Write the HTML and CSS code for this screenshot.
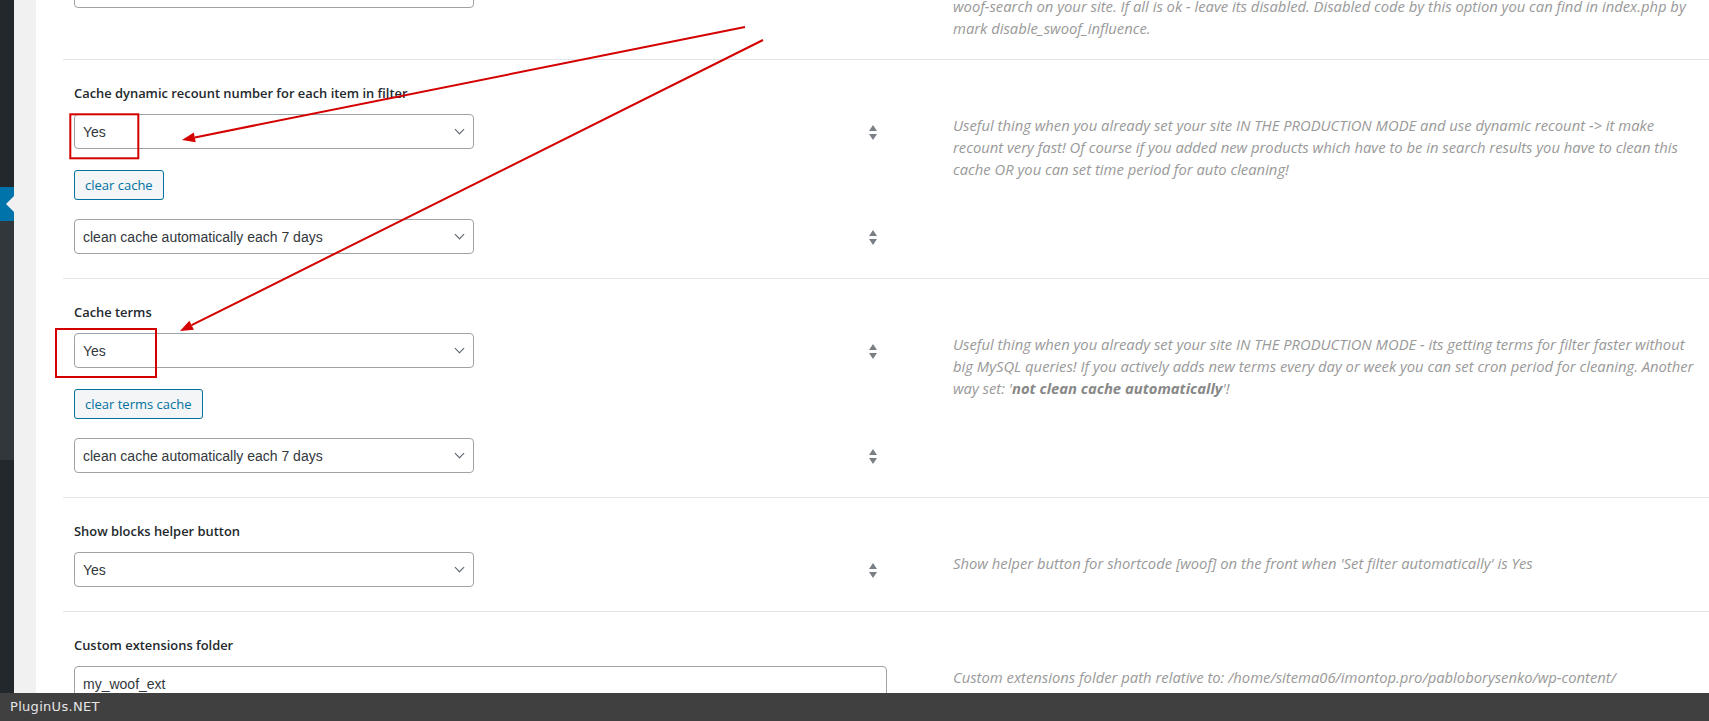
FILE: index.html
```html
<!DOCTYPE html>
<html>
<head>
	<meta charset="utf-8">
	<title>WOOF - Advanced options</title>
	<link rel="stylesheet" href="styles.css">
</head>
<body>
	<div class="wrap">
		<div class="adminmenu">
			<div class="menu-dark menu-top"></div>
			<div class="menu-current"><span class="menu-pointer"></span></div>
			<div class="menu-sub"></div>
			<div class="menu-dark menu-rest"></div>
		</div>
		<div class="gutter"></div>

		<div class="panel">
			<!-- previous option, scrolled mostly out of view -->
			<div class="row row-first">
				<div class="field">
					<div class="label">Disable swoof influence</div>
					<div class="ctl">
						<div class="sel"><select><option>No</option></select></div>
						<svg class="sort" width="8" height="16" viewBox="0 0 8 16"><path d="M0 6 4 0 8 6z M0 9 8 9 4 15z"/></svg>
					</div>
				</div>
				<div class="desc">Sometimes code 'wp_query->is_post_type_archive = true' does not necessary. Try to disable this and try<br>woof-search on your site. If all is ok - leave its disabled. Disabled code by this option you can find in index.php by<br>mark disable_swoof_influence.</div>
			</div>

			<div class="row">
				<div class="field">
					<div class="label">Cache dynamic recount number for each item in filter</div>
					<div class="ctl">
						<div class="sel"><select><option>Yes</option></select></div>
						<svg class="sort" width="8" height="16" viewBox="0 0 8 16"><path d="M0 6 4 0 8 6z M0 9 8 9 4 15z"/></svg>
					</div>
					<button type="button" class="btn">clear cache</button>
					<div class="ctl">
						<div class="sel"><select><option>clean cache automatically each 7 days</option></select></div>
						<svg class="sort" width="8" height="16" viewBox="0 0 8 16"><path d="M0 6 4 0 8 6z M0 9 8 9 4 15z"/></svg>
					</div>
				</div>
				<div class="desc">Useful thing when you already set your site IN THE PRODUCTION MODE and use dynamic recount -&gt; it make<br>recount very fast! Of course if you added new products which have to be in search results you have to clean this<br>cache OR you can set time period for auto cleaning!</div>
			</div>

			<div class="row">
				<div class="field">
					<div class="label">Cache terms</div>
					<div class="ctl">
						<div class="sel"><select><option>Yes</option></select></div>
						<svg class="sort" width="8" height="16" viewBox="0 0 8 16"><path d="M0 6 4 0 8 6z M0 9 8 9 4 15z"/></svg>
					</div>
					<button type="button" class="btn">clear terms cache</button>
					<div class="ctl">
						<div class="sel"><select><option>clean cache automatically each 7 days</option></select></div>
						<svg class="sort" width="8" height="16" viewBox="0 0 8 16"><path d="M0 6 4 0 8 6z M0 9 8 9 4 15z"/></svg>
					</div>
				</div>
				<div class="desc">Useful thing when you already set your site IN THE PRODUCTION MODE - its getting terms for filter faster without<br>big MySQL queries! If you actively adds new terms every day or week you can set cron period for cleaning. Another<br>way set: '<b>not clean cache automatically</b>'!</div>
			</div>

			<div class="row">
				<div class="field">
					<div class="label">Show blocks helper button</div>
					<div class="ctl">
						<div class="sel"><select><option>Yes</option></select></div>
						<svg class="sort" width="8" height="16" viewBox="0 0 8 16"><path d="M0 6 4 0 8 6z M0 9 8 9 4 15z"/></svg>
					</div>
				</div>
				<div class="desc">Show helper button for shortcode [woof] on the front when 'Set filter automatically' is Yes</div>
			</div>

			<div class="row">
				<div class="field">
					<div class="label">Custom extensions folder</div>
					<input type="text" class="txt" value="my_woof_ext">
				</div>
				<div class="desc">Custom extensions folder path relative to: /home/sitema06/imontop.pro/pabloborysenko/wp-content/</div>
			</div>
		</div>
	</div>

	<!-- red annotations drawn over the screenshot -->
	<svg class="marks" width="1709" height="721" viewBox="0 0 1709 721">
		<g fill="none" stroke="#d40000" stroke-width="2">
			<line x1="745" y1="27" x2="194.8" y2="137.4"/>
			<line x1="763" y1="40" x2="191.6" y2="325.2"/>
			<rect x="70.3" y="114.3" width="68" height="44"/>
			<rect x="56" y="329" width="100" height="48"/>
		</g>
		<g fill="#d40000">
			<polygon points="182,140 193.8,132.5 195.7,142.3"/>
			<polygon points="180,331 189.4,320.7 193.9,329.7"/>
		</g>
	</svg>

	<div class="brandbar">PluginUs.NET</div>
</body>
</html>
```

FILE: styles.css
```css
html, body{
	margin: 0;
	height: 100%;
	overflow: hidden;
}
body{
	font: 13px "Open Sans", sans-serif;
	background: #f1f1f1;
	color: #32373c;
}
.wrap{
	display: flex;
	height: 721px;
}

/* admin menu strip on the left */
.adminmenu{
	width: 14px;
	display: flex;
	flex-direction: column;
}
.menu-dark{
	background: #23282d;
}
.menu-top{
	height: 187px;
}
.menu-rest{
	flex: 1;
}
.menu-current{
	height: 34px;
	background: #0073aa;
	display: flex;
	align-items: center;
	justify-content: flex-end;
}
.menu-pointer{
	width: 0;
	height: 0;
	border-top: 8px solid transparent;
	border-bottom: 8px solid transparent;
	border-right: 8px solid #f1f1f1;
}
.menu-sub{
	height: 239px;
	background: #32373c;
}
.gutter{
	width: 22px;
	background: #f1f1f1;
}

/* settings panel */
.panel{
	flex: 1;
	background: #fff;
	padding-left: 27px;
	display: flex;
	flex-direction: column;
	overflow: hidden;
}
.row{
	display: grid;
	grid-template-columns: 813px 1fr;
	column-gap: 66px;
	padding: 23px 0 24px 11px;
	border-top: 1px solid #e2e4e7;
}
.row-first{
	margin-top: -81px;
	padding-bottom: 20px;
	border-top: 0;
}
.label{
	font-weight: 600;
	font-size: 12.9px;
	line-height: 20px;
	color: #23282d;
	margin-bottom: 11px;
}
.ctl{
	display: flex;
	align-items: center;
	justify-content: space-between;
}
.sel{
	position: relative;
	width: 400px;
}
.sel::after{
	content: "";
	position: absolute;
	right: 11px;
	top: 50%;
	width: 6px;
	height: 6px;
	margin-top: -6px;
	border-right: 1.5px solid #555d66;
	border-bottom: 1.5px solid #555d66;
	transform: rotate(45deg);
	pointer-events: none;
}
.sel select,
.txt{
	-webkit-appearance: none;
	appearance: none;
	box-sizing: border-box;
	width: 100%;
	height: 35px;
	margin: 0;
	padding: 0 24px 0 8px;
	border: 1px solid #9ea3a8;
	border-radius: 4px;
	background: #fff;
	font: 14px "Liberation Sans", Arial, sans-serif;
	color: #32373c;
	display: block;
}
.txt{
	padding-right: 8px;
}
.sort{
	margin-right: 10px;
	margin-top: 2px;
	fill: #7a7f86;
}
.btn{
	display: block;
	height: 30px;
	margin: 21px 0 19px;
	padding: 0 10px;
	border: 1px solid #0071a1;
	border-radius: 3px;
	background: #f3f5f6;
	color: #0071a1;
	font: 13px "Open Sans", sans-serif;
	cursor: pointer;
}
.desc{
	padding-top: 31px;
	font: italic 14.8px/22px "Open Sans", sans-serif;
	color: #999;
}
.desc b{
	font-weight: 700;
	color: #888;
}

/* overlays */
.marks{
	position: fixed;
	left: 0;
	top: 0;
	pointer-events: none;
}
.brandbar{
	position: fixed;
	left: 0;
	right: 0;
	bottom: 0;
	height: 28px;
	padding-left: 10px;
	background: #404040;
	color: #e6e6e6;
	font: 13px/28px "DejaVu Sans", sans-serif;
	letter-spacing: 0.3px;
}
```
